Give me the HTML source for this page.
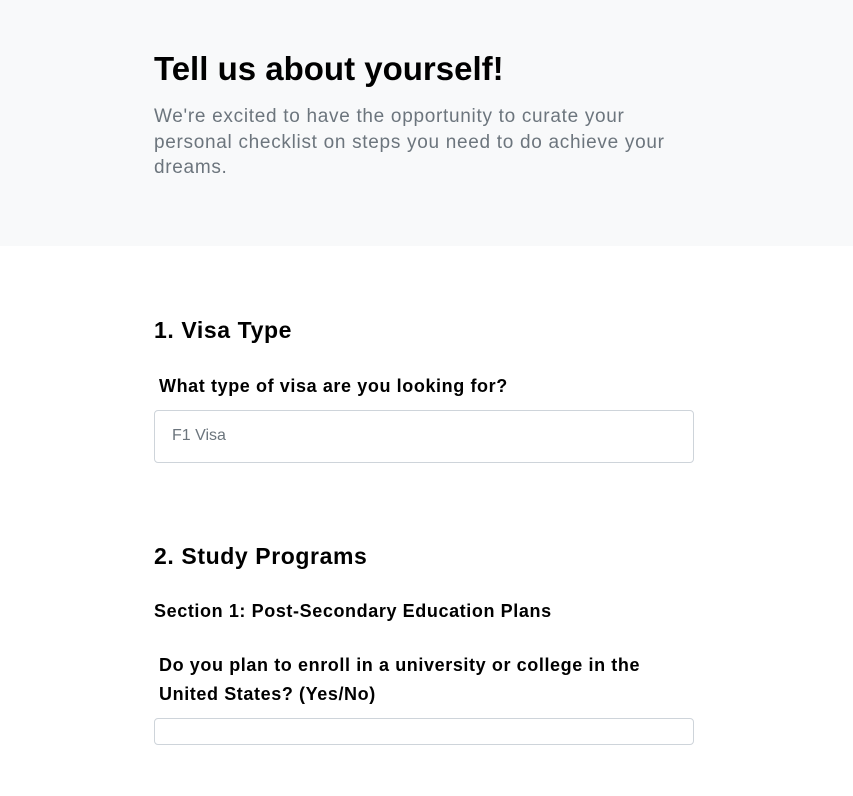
<!DOCTYPE html>
<html><head><meta charset="utf-8"><style>
*{margin:0;padding:0;box-sizing:border-box}
body{width:853px;height:796px;overflow:hidden;background:#fff;font-family:"Liberation Sans",sans-serif;color:#000}
.hdr{background:#f8f9fa;height:246px;position:relative}
h1{position:absolute;left:154px;top:50px;font-size:33px;font-weight:bold;letter-spacing:0px;color:#000}
.sub{position:absolute;left:154px;top:104px;font-size:19px;line-height:25.5px;color:#6c757d;letter-spacing:0.7px}
.a{position:absolute;left:154px}
h2{font-size:23px;font-weight:bold;letter-spacing:0.6px}
.lbl{font-size:18px;font-weight:bold;letter-spacing:0.6px;line-height:29px}
.inp{position:absolute;left:154px;width:540px;border:1px solid #ced4da;border-radius:4px;background:#fff}
</style></head><body>
<div class="hdr">
<h1>Tell us about yourself!</h1>
<div class="sub">We're excited to have the opportunity to curate your<br>personal checklist on steps you need to do achieve your<br>dreams.</div>
</div>
<h2 class="a" style="top:317px">1. Visa Type</h2>
<div class="a lbl" style="left:159px;top:372px">What type of visa are you looking for?</div>
<div class="inp" style="top:410px;height:53px"><span style="position:absolute;left:17px;top:16px;font-size:16px;color:#6c757d">F1 Visa</span></div>
<h2 class="a" style="top:543px">2. Study Programs</h2>
<div class="a lbl" style="top:597px">Section 1: Post-Secondary Education Plans</div>
<div class="a lbl" style="left:159px;top:651px">Do you plan to enroll in a university or college in the<br>United States? (Yes/No)</div>
<div class="inp" style="top:718px;height:27px"></div>
</body></html>
